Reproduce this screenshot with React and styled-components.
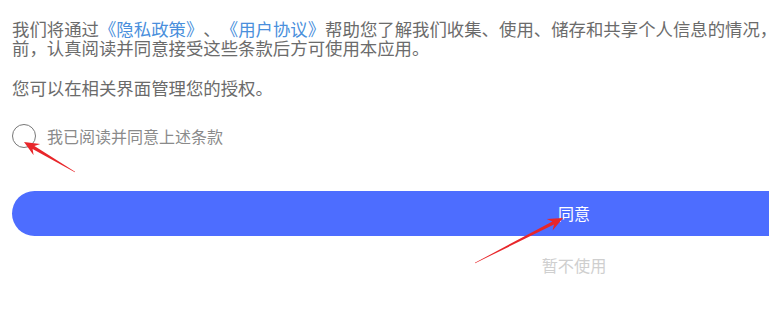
import React from "react";
import styled, { createGlobalStyle } from "styled-components";

const Global = createGlobalStyle`
  html, body { margin: 0; padding: 0; background: #fff; overflow: hidden; }
  body { width: 769px; height: 309px; }
`;

const Page = styled.div`
  position: relative;
  width: 1124px;
  padding: 0 12px;
  font-family: "Noto Sans CJK SC", "Noto Sans", sans-serif;
  color: #666;
  text-spacing-trim: space-all;
  font-kerning: none;
`;

const Para = styled.p`
  margin: ${(p) => p.$top}px 0 0;
  font-size: 17.4px;
  line-height: 18.5px;
  color: #6b6b6b;
`;

const Link = styled.span`
  color: #4a8fdc;
`;

const CheckRow = styled.label`
  display: flex;
  align-items: center;
  gap: 11px;
  margin-top: 26px;
  height: 24px;
`;

const Circle = styled.span`
  width: 22px;
  height: 22px;
  border: 1px solid #777;
  border-radius: 50%;
  box-sizing: content-box;
  flex: none;
`;

const CheckText = styled.span`
  font-size: 16px;
  color: #8a8a8a;
  line-height: 20px;
`;

const AgreeButton = styled.button`
  display: flex;
  align-items: center;
  justify-content: center;
  width: 100%;
  height: 45px;
  margin-top: 43px;
  border: none;
  border-radius: 23px;
  background: #4d6dff;
  color: #fff;
  font-family: inherit;
  font-size: 16px;
  padding: 0;
`;

const Decline = styled.div`
  margin-top: 19px;
  text-align: center;
  font-size: 16.2px;
  line-height: 20px;
  color: #cfcfcf;
`;

const Overlay = styled.svg`
  position: absolute;
  left: 0;
  top: 0;
  width: 769px;
  height: 309px;
  pointer-events: none;
`;

function arrowPoints(tx, ty, px, py, headLen = 15, headW = 6.5, shaft = 1.8) {
  const dx = px - tx;
  const dy = py - ty;
  const len = Math.hypot(dx, dy);
  const ux = dx / len;
  const uy = dy / len;
  const nx = -uy;
  const ny = ux;
  const bx = px - ux * headLen;
  const by = py - uy * headLen;
  const nbx = px - ux * (headLen - 4);
  const nby = py - uy * (headLen - 4);
  const pts = [
    [tx + nx * 0.2, ty + ny * 0.2],
    [nbx + nx * shaft, nby + ny * shaft],
    [bx + nx * headW, by + ny * headW],
    [px, py],
    [bx - nx * headW, by - ny * headW],
    [nbx - nx * shaft, nby - ny * shaft],
    [tx - nx * 0.2, ty - ny * 0.2],
  ];
  return pts.map((p) => p.map((v) => v.toFixed(1)).join(",")).join(" ");
}

export default function App() {
  return (
    <>
      <Global />
      <Page>
        <Para $top={20}>
          我们将通过<Link>《隐私政策》</Link>、<Link>《用户协议》</Link>
          帮助您了解我们收集、使用、储存和共享个人信息的情况，以及您所享有的权利。请您务必在使用本应用前，认真阅读并同意接受这些条款后方可使用本应用。
        </Para>
        <Para $top={22}>您可以在相关界面管理您的授权。</Para>
        <CheckRow>
          <Circle />
          <CheckText>我已阅读并同意上述条款</CheckText>
        </CheckRow>
        <AgreeButton>同意</AgreeButton>
        <Decline>暂不使用</Decline>
      </Page>
      <Overlay viewBox="0 0 769 309">
        <polygon points={arrowPoints(75, 172, 24, 142)} fill="#e8262a" />
        <polygon points={arrowPoints(475, 263, 563, 218)} fill="#e8262a" />
      </Overlay>
    </>
  );
}
